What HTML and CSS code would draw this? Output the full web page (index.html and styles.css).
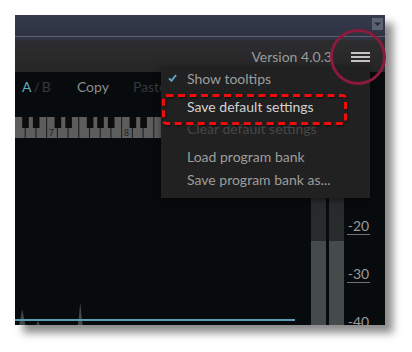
FILE: index.html
```html
<!DOCTYPE html>
<html lang="en">
<head>
    <meta charset="UTF-8" />
    <title>Plugin menu</title>
    <link rel="stylesheet" href="styles.css">
</head>
<body>
    <div class="page">
        <div class="window">
            <div class="titlebar">
                <span class="drop-btn">
                    <svg viewBox="0 0 11 12" width="11" height="12" aria-hidden="true">
                        <path d="M2 4.5 H9 L5.5 8 Z" fill="#272b37" />
                    </svg>
                </span>
            </div>

            <div class="header">
                <span class="version">Version 4.0.3</span>
                <svg class="menu-icon" viewBox="0 0 19 10" width="19" height="10" aria-hidden="true">
                    <rect x="0" y="0" width="19" height="2" fill="#c4c4c4" />
                    <rect x="0" y="4" width="19" height="2" fill="#c4c4c4" />
                    <rect x="0" y="8" width="19" height="2" fill="#c4c4c4" />
                </svg>
            </div>

            <div class="main">
                <div class="editor">
                    <div class="toolbar">
                        <span class="ab">
                            <span class="ab-on">A</span>
                            <span class="ab-off">/</span>
                            <span class="ab-off">B</span>
                        </span>
                        <span class="copy">Copy</span>
                        <span class="paste">Paste</span>
                    </div>

                    <!-- keyboard, starts on G6 -->
                    <svg class="piano" viewBox="0 0 290 21" width="290" height="21" aria-hidden="true">
                        <rect x="0" y="0" width="290" height="21" fill="#1a1a1a" />
                        <g fill="#5d5d5d">
                            <rect x="0" y="0" width="9.7" height="21" />
                            <rect x="10.71" y="0" width="9.7" height="21" />
                            <rect x="21.43" y="0" width="9.7" height="21" />
                            <rect x="32.14" y="0" width="9.7" height="21" />
                            <rect x="42.86" y="0" width="9.7" height="21" />
                            <rect x="53.57" y="0" width="9.7" height="21" />
                            <rect x="64.29" y="0" width="9.7" height="21" />
                            <rect x="75" y="0" width="9.7" height="21" />
                            <rect x="85.71" y="0" width="9.7" height="21" />
                            <rect x="96.43" y="0" width="9.7" height="21" />
                            <rect x="107.14" y="0" width="9.7" height="21" />
                            <rect x="117.86" y="0" width="9.7" height="21" />
                            <rect x="128.57" y="0" width="9.7" height="21" />
                            <rect x="139.29" y="0" width="9.7" height="21" />
                            <rect x="150" y="0" width="9.7" height="21" />
                            <rect x="160.71" y="0" width="9.7" height="21" />
                            <rect x="171.43" y="0" width="9.7" height="21" />
                            <rect x="182.14" y="0" width="9.7" height="21" />
                            <rect x="192.86" y="0" width="9.7" height="21" />
                            <rect x="203.57" y="0" width="9.7" height="21" />
                            <rect x="214.29" y="0" width="9.7" height="21" />
                            <rect x="225" y="0" width="9.7" height="21" />
                            <rect x="235.71" y="0" width="9.7" height="21" />
                            <rect x="246.43" y="0" width="9.7" height="21" />
                            <rect x="257.14" y="0" width="9.7" height="21" />
                            <rect x="267.86" y="0" width="9.7" height="21" />
                            <rect x="278.57" y="0" width="9.7" height="21" />
                        </g>
                        <g fill="#0c0c0c">
                            <rect x="7.2" y="0" width="6.6" height="11" />
                            <rect x="17.9" y="0" width="6.6" height="11" />
                            <rect x="39.6" y="0" width="6.6" height="11" />
                            <rect x="50.3" y="0" width="6.6" height="11" />
                            <rect x="71.8" y="0" width="6.6" height="11" />
                            <rect x="82.2" y="0" width="6.6" height="11" />
                            <rect x="92.9" y="0" width="6.6" height="11" />
                            <rect x="114.6" y="0" width="6.6" height="11" />
                            <rect x="125.3" y="0" width="6.6" height="11" />
                            <rect x="146.8" y="0" width="6.6" height="11" />
                            <rect x="157.2" y="0" width="6.6" height="11" />
                            <rect x="167.9" y="0" width="6.6" height="11" />
                            <rect x="189.6" y="0" width="6.6" height="11" />
                            <rect x="200.3" y="0" width="6.6" height="11" />
                            <rect x="221.8" y="0" width="6.6" height="11" />
                            <rect x="232.2" y="0" width="6.6" height="11" />
                            <rect x="242.9" y="0" width="6.6" height="11" />
                            <rect x="264.6" y="0" width="6.6" height="11" />
                            <rect x="275.3" y="0" width="6.6" height="11" />
                        </g>
                        <text x="33.6" y="19" class="octave">7</text>
                        <text x="108.6" y="19" class="octave">8</text>
                        <text x="183.6" y="19" class="octave">9</text>
                    </svg>

                    <svg class="graph" viewBox="0 0 290 187" width="290" height="187" aria-hidden="true">
                        <path d="M4 187 C6 180 6.6 172 7.3 172 C8 172 8.6 180 10.6 187 Z" fill="#3f4446" />
                        <path d="M21.5 187 C22.3 184 22.7 183 23 183 C23.3 183 23.7 184 24.5 187 Z" fill="#3f4446" />
                        <path d="M62.8 187 C64.3 178 64.8 166 65.3 166 C65.8 166 66.3 178 67.8 187 Z" fill="#42474a" />
                        <rect x="0" y="181" width="280" height="2" fill="#5b9db0" />
                    </svg>
                </div>

                <div class="meter">
                    <div class="bar"></div>
                    <div class="bar"></div>
                    <div class="scale">
                        <span class="tick">-20</span>
                        <span class="tick">-30</span>
                        <span class="tick">-40</span>
                    </div>
                </div>
            </div>

            <ul class="menu">
                <li class="menu-item">
                    <span class="mark">
                        <svg viewBox="0 0 9 8" width="9" height="8" aria-hidden="true">
                            <path d="M1 4.4 L3.5 6.8 L8 1" fill="none" stroke="#5aa6c0" stroke-width="2" />
                        </svg>
                    </span>
                    Show tooltips
                </li>
                <li class="menu-sep"></li>
                <li class="menu-item is-hover"><span class="mark"></span>Save default settings</li>
                <li class="menu-item is-disabled"><span class="mark"></span>Clear default settings</li>
                <li class="menu-sep"></li>
                <li class="menu-item"><span class="mark"></span>Load program bank</li>
                <li class="menu-item"><span class="mark"></span>Save program bank as...</li>
            </ul>

            <!-- red dashed box drawn over the screenshot -->
            <svg class="highlight" viewBox="0 0 186 32" width="186" height="32" aria-hidden="true">
                <rect x="1.5" y="1.5" width="182" height="28" rx="3" fill="none" stroke="#f00c0c"
                      stroke-width="3" stroke-dasharray="7 4.5" />
            </svg>
        </div>

        <!-- circle callout round the menu button -->
        <svg class="callout" viewBox="0 0 58 58" width="58" height="58" aria-hidden="true">
            <circle cx="29" cy="29" r="26.5" fill="none" stroke="#8b1a3c" stroke-width="3" />
        </svg>
    </div>
</body>
</html>
```

FILE: styles.css
```css
*, *::before, *::after {
    box-sizing: border-box;
}

body {
    margin: 0;
    background: #fff;
    font-family: Lato, "Liberation Sans", sans-serif;
}

.page {
    position: relative;
    width: 412px;
    height: 352px;
    padding: 15px;
}

.window {
    position: relative;
    width: 370px;
    height: 310px;
    overflow: hidden;
    display: flex;
    flex-direction: column;
    box-shadow: 8px 8px 8px rgba(0, 0, 0, 0.45);
}

/* host title strip */
.titlebar {
    height: 22px;
    flex: none;
    display: flex;
    justify-content: flex-end;
    padding: 3px 2px 0 0;
    background: linear-gradient(#353b4b, #2e3342);
    border-bottom: 1px solid #5b6172;
}

.drop-btn {
    display: block;
    width: 11px;
    height: 12px;
    background: #5c6272;
}

.drop-btn svg {
    display: block;
}

/* plugin header */
.header {
    height: 35px;
    flex: none;
    display: flex;
    align-items: center;
    justify-content: flex-end;
    padding-right: 15px;
    border-top: 3px solid #2f3342;
    background: linear-gradient(#2d2d2f, #262627);
}

.version {
    font-size: 14px;
    color: #9a9a9a;
    margin-right: 19px;
}

.menu-icon {
    display: block;
    margin-top: 2px;
}

/* editor + meter */
.main {
    flex: 1;
    display: flex;
    background: #080b0d;
}

.editor {
    width: 290px;
    flex: none;
    display: flex;
    flex-direction: column;
}

.toolbar {
    height: 28px;
    margin-bottom: 17px;
    display: flex;
    align-items: center;
    padding-left: 7px;
    font-size: 14px;
    color: #8c8c8c;
}

.ab {
    display: flex;
    gap: 2px;
}

.ab-on {
    color: #5ea9c2;
}

.ab-off {
    color: #35393c;
}

.copy {
    margin-left: 26px;
}

.paste {
    margin-left: 24px;
    color: #34383b;
}

.piano,
.graph {
    display: block;
    flex: none;
}

.octave {
    font-family: "DejaVu Sans", sans-serif;
    font-size: 9px;
    fill: #262626;
}

.meter {
    flex: 1;
    display: flex;
    padding-left: 6px;
}

.bar {
    width: 15px;
    margin-right: 3px;
    background: linear-gradient(#272b2c 169px, #454a4b 169px);
}

.scale {
    width: 23px;
    display: flex;
    flex-direction: column;
    padding-top: 115px;
}

.tick {
    height: 48px;
    flex: none;
    display: flex;
    align-items: flex-end;
    justify-content: center;
    padding-bottom: 1px;
    font-size: 14px;
    line-height: 14px;
    color: #9a9a9a;
    border-bottom: 1px solid #707070;
}

/* popup menu */
.menu {
    position: absolute;
    left: 146px;
    top: 51px;
    width: 209px;
    height: 132px;
    margin: 0;
    padding: 1px 0 0;
    list-style: none;
    background: #212121;
    box-shadow: 0 2px 6px rgba(0, 0, 0, 0.5);
}

.menu-item {
    height: 22.5px;
    display: flex;
    align-items: center;
    font-size: 14px;
    color: #9d9d9d;
    white-space: nowrap;
}

.menu-item.is-hover {
    color: #d2d2d2;
}

.menu-item.is-disabled {
    color: #474747;
}

.mark {
    width: 26px;
    flex: none;
    display: flex;
    padding-left: 7px;
}

.mark svg {
    display: block;
}

.menu-sep {
    height: 5.5px;
}

/* annotations */
.highlight {
    position: absolute;
    left: 147px;
    top: 79px;
    filter: drop-shadow(1px 1px 1px rgba(0, 0, 0, 0.6));
}

.callout {
    position: absolute;
    left: 329px;
    top: 28px;
}
```
